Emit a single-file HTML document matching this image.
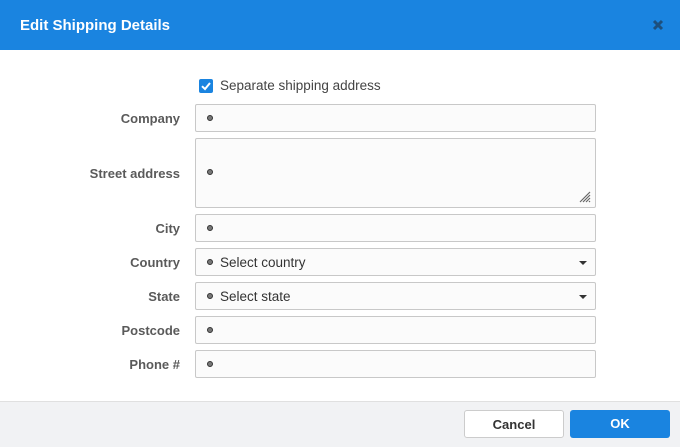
<!DOCTYPE html>
<html><head><meta charset="utf-8"><style>
*{box-sizing:border-box;margin:0;padding:0}
body{width:680px;height:447px;background:#fff;font-family:"Liberation Sans",sans-serif;position:relative;overflow:hidden}
.hdr{position:absolute;left:0;top:0;width:680px;height:50px;background:#1a84e0;color:#fff;font-weight:bold;font-size:15px;line-height:52px;padding-left:20px}
.x{position:absolute;left:651px;top:18px;width:14px;height:14px}
.lbl{position:absolute;right:500px;font-size:13px;color:#5a5a5a;font-weight:bold;text-align:right}
.inp{position:absolute;left:195px;width:401px;height:28px;border:1px solid #c8c8c8;border-radius:2px;background:#fbfbfb}
.dot{position:absolute;left:11px;width:6px;height:6px;border-radius:50%;background:#777;border:1px solid #333}
.sel{position:absolute;left:24px;font-size:13.5px;color:#333}
.arr{position:absolute;right:8px;top:12px;border-left:4px solid transparent;border-right:4px solid transparent;border-top:4px solid #333}
.ftr{position:absolute;left:0;top:401px;width:680px;height:46px;background:#f1f2f4;border-top:1px solid #e0e0e0}
.btn{position:absolute;top:410px;height:28px;border-radius:3px;font-size:13px;font-weight:bold;text-align:center;line-height:28px}
</style></head><body>
<div class="hdr">Edit Shipping Details</div>
<svg class="x" viewBox="0 0 14 14"><path d="M3 3L11 11M11 3L3 11" stroke="#1d4f7d" stroke-width="3"/></svg>
<svg style="position:absolute;left:199px;top:79px" width="14" height="14" viewBox="0 0 14 14"><rect width="14" height="14" rx="2" fill="#1a84e0"/><path d="M3 7.2L6 10L11 4" stroke="#fff" stroke-width="2" fill="none"/></svg>
<div style="position:absolute;left:220px;top:78px;font-size:13.5px;color:#444">Separate shipping address</div>

<div class="lbl" style="top:111px">Company</div>
<div class="inp" style="top:104px;height:28px"><div class="dot" style="top:10px"></div></div>
<div class="lbl" style="top:166px">Street address</div>
<div class="inp" style="top:138px;height:70px"><div class="dot" style="top:30px"></div>
<svg style="position:absolute;right:4px;bottom:4px" width="12" height="12" viewBox="0 0 12 12"><path d="M1 11L11 1M4 11L11 4M7 11L11 7M10 11L11 10" stroke="#666" stroke-width="1.2"/></svg></div>
<div class="lbl" style="top:221px">City</div>
<div class="inp" style="top:214px"><div class="dot" style="top:10px"></div></div>
<div class="lbl" style="top:255px">Country</div>
<div class="inp" style="top:248px"><div class="dot" style="top:10px"></div><div class="sel" style="top:6px">Select country</div><div class="arr"></div></div>
<div class="lbl" style="top:289px">State</div>
<div class="inp" style="top:282px"><div class="dot" style="top:10px"></div><div class="sel" style="top:6px">Select state</div><div class="arr"></div></div>
<div class="lbl" style="top:323px">Postcode</div>
<div class="inp" style="top:316px"><div class="dot" style="top:10px"></div></div>
<div class="lbl" style="top:357px">Phone #</div>
<div class="inp" style="top:350px"><div class="dot" style="top:10px"></div></div>

<div class="ftr"></div>
<div class="btn" style="left:464px;width:100px;background:#fff;border:1px solid #ccc;color:#333">Cancel</div>
<div class="btn" style="left:570px;width:100px;background:#1a84e0;color:#fff">OK</div>
</body></html>
